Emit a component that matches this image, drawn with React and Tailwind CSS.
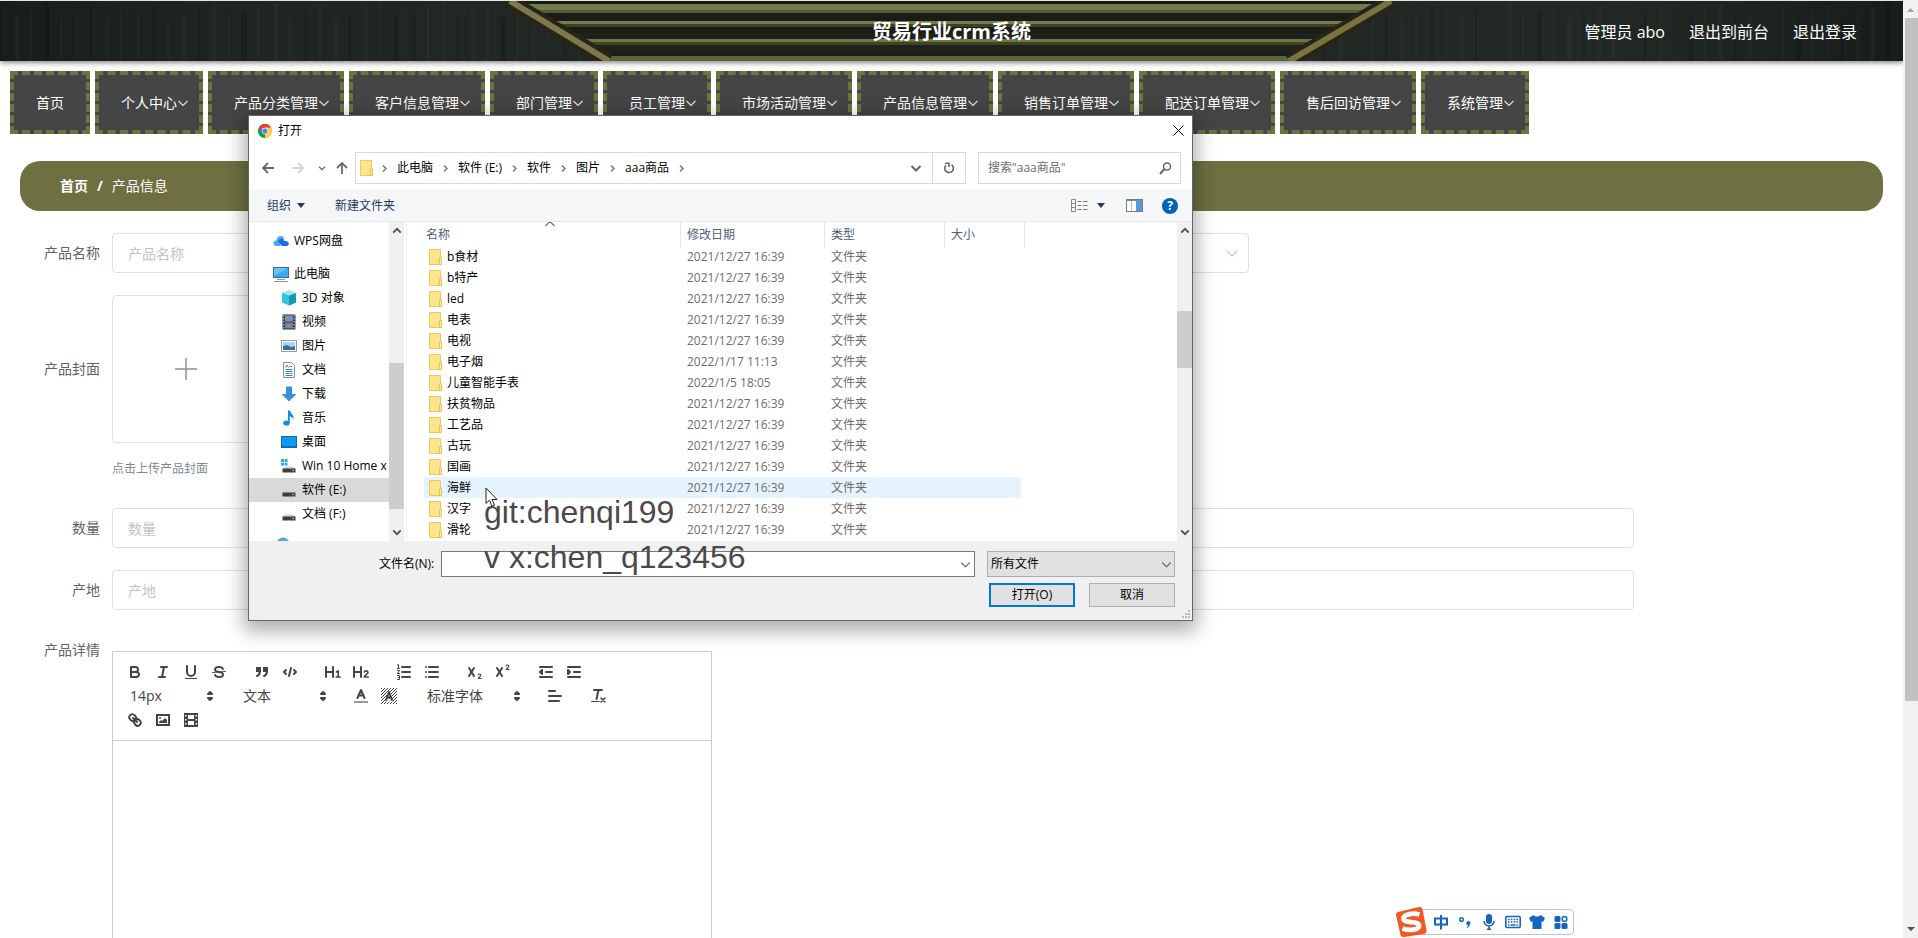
import React from "react";

const NAV = [
  ["首页", false],
  ["个人中心", true],
  ["产品分类管理", true],
  ["客户信息管理", true],
  ["部门管理", true],
  ["员工管理", true],
  ["市场活动管理", true],
  ["产品信息管理", true],
  ["销售订单管理", true],
  ["配送订单管理", true],
  ["售后回访管理", true],
  ["系统管理", true],
];

const FILES = [
  ["b食材", "2021/12/27 16:39"],
  ["b特产", "2021/12/27 16:39"],
  ["led", "2021/12/27 16:39"],
  ["电表", "2021/12/27 16:39"],
  ["电视", "2021/12/27 16:39"],
  ["电子烟", "2022/1/17 11:13"],
  ["儿童智能手表", "2022/1/5 18:05"],
  ["扶贫物品", "2021/12/27 16:39"],
  ["工艺品", "2021/12/27 16:39"],
  ["古玩", "2021/12/27 16:39"],
  ["国画", "2021/12/27 16:39"],
  ["海鲜", "2021/12/27 16:39"],
  ["汉字", "2021/12/27 16:39"],
  ["滑轮", "2021/12/27 16:39"],
];

function Chevron({ dir = "down", size = 12, width = 1.2, className = "" }) {
  const d = {
    down: "M1.5 4 L6 8.5 L10.5 4",
    up: "M1.5 8 L6 3.5 L10.5 8",
    right: "M4 2 L8 6 L4 10",
  }[dir];
  return (
    <svg width={size} height={size} viewBox="0 0 12 12" fill="none" stroke="currentColor" strokeWidth={width} className={className} aria-hidden="true">
      <path d={d} />
    </svg>
  );
}

function HeaderArt() {
  const streaks = [];
  for (let i = 0; i < 120; i++) {
    const x = (i * 137) % 1903;
    const o = 0.05 + ((i * 7) % 5) * 0.025;
    streaks.push(
      <rect key={i} x={x} y={(i * 11) % 20} width={2 + (i % 4)} height="60" fill={i % 3 ? "#3b4640" : "#050807"} opacity={o + 0.05} />
    );
  }
  return (
    <svg className="absolute inset-0 h-full w-full" viewBox="0 0 1903 60" preserveAspectRatio="none" aria-hidden="true">
      <defs>
        <linearGradient id="wood" x1="0" x2="1">
          <stop offset="0" stopColor="#191e1b" />
          <stop offset="0.15" stopColor="#202723" />
          <stop offset="0.85" stopColor="#222925" />
          <stop offset="1" stopColor="#181d1a" />
        </linearGradient>
        <clipPath id="plate">
          <path d="M510 0 H1391 L1289 60 H609 Z" />
        </clipPath>
      </defs>
      <rect width="1903" height="60" fill="url(#wood)" />
      {streaks}
      <g clipPath="url(#plate)">
        <rect x="500" width="900" height="60" fill="#1b1c14" />
        <rect x="500" y="32" width="900" height="6" fill="#1d221f" />
        <rect x="500" y="44" width="900" height="8" fill="#1d221f" />
        <rect x="500" y="3" width="900" height="6" fill="#717b50" />
        <rect x="500" y="9" width="900" height="3" fill="#535b36" />
        <rect x="500" y="20" width="900" height="3" fill="#767c52" />
        <rect x="500" y="23" width="900" height="3" fill="#3c4121" />
        <rect x="500" y="38" width="900" height="3" fill="#6f7547" />
        <rect x="500" y="41" width="900" height="3" fill="#41451f" />
        <rect x="500" y="55" width="900" height="5" fill="#5e6339" />
      </g>
      <path d="M510 0 L609 60" stroke="#2a2416" strokeWidth="14" />
      <path d="M1391 0 L1289 60" stroke="#2a2416" strokeWidth="14" />
      <path d="M510 0 L609 60" stroke="#7c7a4c" strokeWidth="6" />
      <path d="M1391 0 L1289 60" stroke="#77743f" strokeWidth="6" />
    </svg>
  );
}

function Header() {
  return (
    <header className="relative z-10 grid h-[61px] shrink-0 grid-cols-[1fr_auto_1fr] items-center border-t border-[#dfe8e0] pt-0.5 text-white shadow-[0_1px_6px_rgba(0,0,0,0.6)]">
      <HeaderArt />
      <span />
      <h1 className="relative text-xl font-bold leading-6">贸易行业crm系统</h1>
      <div className="relative flex justify-end gap-6 pr-[46px] text-base leading-6">
        <span>管理员 abo</span>
        <a href="#front">退出到前台</a>
        <a href="#logout">退出登录</a>
      </div>
    </header>
  );
}

function Nav() {
  return (
    <nav className="flex shrink-0 gap-[5px] pl-[10px] pt-[10px]">
      {NAV.map(([t, more]) => (
        <a
          key={t}
          href="#nav"
          className={
            "flex h-[63px] shrink-0 items-center border-4 border-dashed border-[#6b7340] bg-[#454545] text-sm text-white " +
            (more ? "pl-[22px] pr-[10px]" : "px-[22px]")
          }
        >
          {t}
          {more && <Chevron width={1.1} className="text-[#e4e4e4]" />}
        </a>
      ))}
    </nav>
  );
}

/* ---------- rich text editor ---------- */

const S = { fill: "none", stroke: "#444", strokeWidth: 2, strokeLinecap: "round", strokeLinejoin: "round" };
const F = { fill: "#444" };

const ICONS = {
  bold: (
    <g {...S}>
      <path d="M5,4H9.5A2.5,2.5,0,0,1,12,6.5v0A2.5,2.5,0,0,1,9.5,9H5Z" />
      <path d="M5,9h5.5A2.5,2.5,0,0,1,13,11.5v0A2.5,2.5,0,0,1,10.5,14H5Z" />
    </g>
  ),
  italic: <path {...S} d="M7,4H13M5,14H11M8,14L10,4" />,
  underline: (
    <g>
      <path {...S} d="M5,3V9a4,4,0,0,0,4,4a4,4,0,0,0,4-4V3" />
      <rect {...F} x="3" y="15" width="12" height="1" />
    </g>
  ),
  strike: (
    <g>
      <path {...S} d="M12.9,6C12.5,4.8 11,4 9,4C6.8,4 5,5 5,6.5C5,8.2 6.5,8.7 9,9C11.5,9.3 13,9.8 13,11.5C13,13 11.2,14 9,14C7,14 5.5,13.2 5.1,12" />
      <path {...S} strokeWidth="1" d="M15.5,8.5L2.5,9.5" />
    </g>
  ),
  quote: (
    <g {...S} strokeLinejoin="miter">
      <rect {...F} x="4" y="5" width="3" height="3" />
      <rect {...F} x="11" y="5" width="3" height="3" />
      <path {...F} d="M7,8c0,4.031-3,5-3,5M14,8c0,4.031-3,5-3,5" />
    </g>
  ),
  code: <path {...S} d="M5,7L3,9L5,11M13,7L15,9L13,11M10,5L8,13" />,
  h1: (
    <g {...S}>
      <path d="M2,4V14M9,4V14M2,9H9" />
      <path strokeWidth="1.6" d="M12.4,9L14.2,7.8V14M12.2,14H16.2" />
    </g>
  ),
  h2: (
    <g {...S}>
      <path d="M2,4V14M9,4V14M2,9H9" />
      <path strokeWidth="1.6" d="M12.3,9C12.6,7.4 16,7.4 16,9.4C16,11 12.4,12.2 12.2,14H16.3" />
    </g>
  ),
  ol: (
    <g {...S}>
      <path d="M7,4H15M7,9H15M7,14H15" />
      <path strokeWidth="1" d="M2.5,2L3.5,1.5V5.5M2.5,5.5H4.5M2.5,7.5H4.5L2.5,10.5H4.5M2.5,12.5H4.5V16.5H2.5M3,14.5H4.5" />
    </g>
  ),
  ul: <path {...S} d="M6,4H15M6,9H15M6,14H15M3,4H3.01M3,9H3.01M3,14H3.01" />,
  sub: (
    <g {...S}>
      <path d="M3,5L8,13M8,5L3,13" />
      <path strokeWidth="1.1" d="M12.2,12C12.5,10.6 15,10.8 14.8,12.3C14.6,13.5 12.6,14 12.3,15.5H15.2" />
    </g>
  ),
  sup: (
    <g {...S}>
      <path d="M3,5L8,13M8,5L3,13" />
      <path strokeWidth="1.1" d="M12.2,3C12.5,1.6 15,1.8 14.8,3.3C14.6,4.5 12.6,5 12.3,6.5H15.2" />
    </g>
  ),
  outdent: (
    <g {...S}>
      <path d="M3,14H15M3,4H15M9,9H15" />
      <path {...F} d="M5,7V11L3,9Z" />
    </g>
  ),
  indent: (
    <g {...S}>
      <path d="M3,14H15M3,4H15M9,9H15" />
      <path {...F} d="M3,7V11L5,9Z" />
    </g>
  ),
  color: (
    <g {...S}>
      <path d="M5.5,11L9,3L12.5,11M6.4,8.5H11.6" />
      <path stroke="#9a9a9a" d="M2,15H16" strokeLinecap="butt" />
    </g>
  ),
  background: (
    <g>
      <defs>
        <pattern id="hatch" width="3" height="3" patternUnits="userSpaceOnUse">
          <path d="M0,3L3,0" stroke="#444" strokeWidth="1" />
        </pattern>
      </defs>
      <rect x="1" y="1" width="16" height="16" fill="url(#hatch)" />
      <path d="M4.5,15L9,3L13.5,15Z" fill="#fff" opacity="0.7" />
      <path {...S} d="M6,13L9,5L12,13M7,10.5H11" />
    </g>
  ),
  align: <path {...S} d="M3,9H15M3,14H13M3,4H9" />,
  clean: (
    <g {...S}>
      <path d="M5,3H13M9.5,3L7.5,12" />
      <path strokeWidth="1.6" d="M12,11L16,15M16,11L12,15" />
      <path strokeWidth="1" d="M2.5,14.5H10" />
    </g>
  ),
  link: (
    <g {...S}>
      <path d="M7,7L11,11" />
      <path d="M8.9,4.577a3.476,3.476,0,0,1,.36,4.679A3.476,3.476,0,0,1,4.577,8.9C3.185,7.5,2.035,6.4,4.217,4.217S7.5,3.185,8.9,4.577Z" />
      <path d="M13.423,9.1a3.476,3.476,0,0,0-4.679-.36,3.476,3.476,0,0,0,.36,4.679c1.392,1.392,2.5,2.542,4.679.36S14.815,10.5,13.423,9.1Z" />
    </g>
  ),
  image: (
    <g>
      <rect {...S} x="3" y="4" width="12" height="10" strokeLinejoin="miter" />
      <circle {...F} cx="6" cy="7" r="1" />
      <path {...F} d="M5,12V11L7,9L8,10L11,7L13,9V12Z" />
    </g>
  ),
  video: (
    <g>
      <rect x="2" y="2" width="14" height="14" {...F} />
      <path fill="#fff" d="M6,4H12V8H6ZM6,10H12V14H6ZM3,4H4.5V5.5H3ZM3,8H4.5V9.5H3ZM3,12H4.5V13.5H3ZM13.5,4H15V5.5H13.5ZM13.5,8H15V9.5H13.5ZM13.5,12H15V13.5H13.5Z" />
    </g>
  ),
};

function Tool({ name }) {
  return (
    <button type="button" aria-label={name} className="flex h-6 w-7 items-center justify-center">
      <svg width="18" height="18" viewBox="0 0 18 18" aria-hidden="true">
        {ICONS[name]}
      </svg>
    </button>
  );
}

function Group({ names }) {
  return (
    <div className="flex">
      {names.map((n) => (
        <Tool key={n} name={n} />
      ))}
    </div>
  );
}

function Picker({ value, label, wide }) {
  return (
    <div className={"relative flex h-6 items-center " + (wide ? "w-[108px]" : "w-[98px]")}>
      <select aria-label={label} className="h-6 w-full appearance-none bg-transparent pl-[9px] text-sm leading-6 text-[#444]">
        <option>{value}</option>
      </select>
      <svg className="pointer-events-none absolute right-0" width="18" height="18" viewBox="0 0 18 18" aria-hidden="true">
        <path d="M7 7L9 5L11 7ZM7 11L9 13L11 11Z" fill="#444" stroke="#444" strokeWidth="2" strokeLinejoin="round" />
      </svg>
    </div>
  );
}

function Editor() {
  return (
    <div className="mt-[19px] w-[600px] border border-[#ccc]">
      <div className="border-b border-[#ccc] p-2">
        <div className="flex gap-[15px]">
          <Group names={["bold", "italic", "underline", "strike"]} />
          <Group names={["quote", "code"]} />
          <Group names={["h1", "h2"]} />
          <Group names={["ol", "ul"]} />
          <Group names={["sub", "sup"]} />
          <Group names={["outdent", "indent"]} />
        </div>
        <div className="flex gap-[15px]">
          <Picker value="14px" label="字号" />
          <Picker value="文本" label="标题" />
          <Group names={["color", "background"]} />
          <Picker value="标准字体" label="字体" wide />
          <Group names={["align"]} />
          <Group names={["clean"]} />
        </div>
        <Group names={["link", "image", "video"]} />
      </div>
      <textarea aria-label="产品详情" className="block h-80 w-full resize-none outline-none" />
    </div>
  );
}

/* ---------- form ---------- */

const INPUT = "h-10 rounded border border-[#dcdfe6] bg-white px-[15px] text-sm text-[#606266] outline-none placeholder:text-[#c0c4cc]";
const LABEL = "w-[100px] shrink-0 text-right text-sm leading-10 text-[#606266]";

function Form() {
  return (
    <form className="flex flex-col gap-[22px] pt-[22px]">
      <div className="flex gap-3">
        <label htmlFor="pname" className={LABEL}>产品名称</label>
        <div className="flex w-[1137px] items-center gap-[200px]">
          <input id="pname" placeholder="产品名称" className={INPUT + " flex-1"} />
          <div className="relative flex flex-1 items-center">
            <select aria-label="产品分类" className={INPUT + " w-full appearance-none"} />
            <Chevron size={14} width={1} className="pointer-events-none absolute right-[10px] text-[#c0c4cc]" />
          </div>
        </div>
      </div>
      <div className="flex gap-3">
        <span className={LABEL + " flex h-[148px] items-center justify-end"}>产品封面</span>
        <div>
          <button type="button" aria-label="产品封面" className="flex h-[148px] w-[148px] items-center justify-center rounded border border-[#dcdfe6]">
            <svg width="24" height="24" viewBox="0 0 24 24" stroke="#8c939d" strokeWidth="1.5" aria-hidden="true">
              <path d="M12 1V23M1 12H23" />
            </svg>
          </button>
          <p className="mt-4 h-[27px] text-xs leading-5 text-[#7d8894]">点击上传产品封面</p>
        </div>
      </div>
      <div className="flex gap-3">
        <label htmlFor="qty" className={LABEL}>数量</label>
        <input id="qty" placeholder="数量" className={INPUT + " w-4/5"} />
      </div>
      <div className="flex gap-3">
        <label htmlFor="origin" className={LABEL}>产地</label>
        <input id="origin" placeholder="产地" className={INPUT + " w-4/5"} />
      </div>
      <div className="flex gap-3">
        <span className="w-[100px] shrink-0 text-right text-sm leading-9 text-[#606266]">产品详情</span>
        <Editor />
      </div>
    </form>
  );
}

/* ---------- file dialog ---------- */

function ChromeIcon() {
  return (
    <svg width="14" height="14" viewBox="0 0 24 24" aria-hidden="true">
      <path d="M12 12L1.6 6A12 12 0 0 1 22.4 6Z" fill="#db4437" />
      <path d="M12 12L22.4 6A12 12 0 0 1 12 24Z" fill="#ffcd40" />
      <path d="M12 12L12 24A12 12 0 0 1 1.6 6Z" fill="#0f9d58" />
      <path d="M12 6H22.4A12 12 0 0 0 1.6 6L7 15Z" fill="#db4437" />
      <path d="M17.2 15L12 24A12 12 0 0 0 22.4 6H12Z" fill="#ffcd40" />
      <circle cx="12" cy="12" r="5.6" fill="#f1f1f1" />
      <circle cx="12" cy="12" r="4.4" fill="#4285f4" />
    </svg>
  );
}

function Folder() {
  return (
    <svg width="14" height="16" viewBox="0 0 14 16" className="shrink-0" aria-hidden="true">
      <path d="M1.5 .5H12.5V15.5H1.5Z" fill="#ffe48e" stroke="#ecc95c" />
      <path d="M11.5 8.5H13.5V15.5H11.5Z" fill="#ffe9a2" stroke="#e3b93c" strokeWidth="0.8" />
    </svg>
  );
}

const SIDE_ICONS = {
  wps: (
    <g>
      <path d="M0.500 11A3.400 3.400 0 0 1 3.400 7.200C4 3 9 1.500 11 5L7 13H3A2.500 2.500 0 0 1 0.500 11Z" fill="#4aa8fa" />
      <path d="M5 8C6.500 4.500 11 4.600 11.400 8C14.200 7.500 16 9 15.900 11A2.600 2.600 0 0 1 13 13H9Z" fill="#1a6fe8" />
    </g>
  ),
  pc: (
    <g>
      <rect x="0.500" y="1.500" width="15" height="10" fill="#3aa9f2" stroke="#2e6f9e" />
      <path d="M1 2H15L1 10Z" fill="#7accff" opacity="0.700" />
      <path d="M4 13.500H12M1 15.500H15" stroke="#8b9aa6" />
    </g>
  ),
  cube: (
    <g>
      <path d="M8 0.500L15 3V12.500L8 15.500L1 12.500V3Z" fill="#35c3d8" />
      <path d="M8 5.500L15 3V12.500L8 15.500Z" fill="#1497b4" />
      <path d="M8 0.500L15 3L8 5.500L1 3Z" fill="#9aeaf2" />
    </g>
  ),
  film: (
    <g>
      <rect x="1.500" y="0.500" width="13" height="15" fill="#333" />
      <rect x="4" y="1.500" width="8" height="6" fill="#6d94d8" />
      <rect x="4" y="8.500" width="8" height="6" fill="#5484cd" />
      <path d="M5 6L7 3.500L10 6.500V7.500H5ZM5 13L8 10L11 13.500Z" fill="#c08a3c" />
      <path d="M2.800 1V15M13.200 1V15" stroke="#ddd" strokeDasharray="1.500 1.500" />
    </g>
  ),
  pic: (
    <g>
      <rect x="0.500" y="2.500" width="15" height="11" fill="#fff" stroke="#9a9a9a" />
      <rect x="2" y="4" width="12" height="8" fill="#a9d4f2" />
      <path d="M2 8L6 7L10 9L14 8V12H2Z" fill="#3c6f94" />
    </g>
  ),
  doc: (
    <g>
      <path d="M2.500 0.500H10.500L13.500 3.500V15.500H2.500Z" fill="#fff" stroke="#8d8d8d" />
      <path d="M4.500 5.500L6 3L7.500 5.500M8.500 4.500H11M4.500 7.500H11.500M4.500 9.500H11.500M4.500 11.500H8M9 11.500H11.500M4.500 13.500H11.500" stroke="#3b86c8" fill="none" />
    </g>
  ),
  down: <path d="M5 0.500H11V8H15.500L8 15.500L0.500 8H5Z" fill="#3b8ede" />,
  music: (
    <g fill="#0f8ee6">
      <ellipse cx="5.500" cy="13" rx="3.200" ry="2.600" />
      <path d="M7 0.500H9C9.500 4 13.500 4.500 12.500 10C12 7.500 10.500 7 8.700 6.600V13H7Z" />
    </g>
  ),
  desk: (
    <g>
      <rect x="0.500" y="2.500" width="15" height="11" fill="#0a9bf5" stroke="#1267a8" />
      <path d="M1 12.500H15" stroke="#0d5f9c" strokeDasharray="2 1" />
    </g>
  ),
  drive: (
    <g>
      <path d="M3.500 8.500H12.500L14.500 11H1.500Z" fill="#d2d2d2" />
      <rect x="1.500" y="10.500" width="13" height="4" fill="#3e3e3e" />
      <rect x="11" y="12" width="2" height="1" fill="#5eea5e" />
    </g>
  ),
  win: (
    <g>
      <path d="M0 1H3V4H0ZM3.700 1H6.500V4H3.700ZM0 4.700H3V7.500H0ZM3.700 4.700H6.500V7.500H3.700Z" fill="#2aa7e8" />
      <path d="M4.500 8.500H12.500L14.500 11H2.500Z" fill="#d2d2d2" />
      <rect x="1.500" y="10.500" width="13" height="4" fill="#3e3e3e" />
      <rect x="11" y="12" width="2" height="1" fill="#5eea5e" />
    </g>
  ),
  net: <circle cx="10" cy="8" r="6.500" fill="#5aa6d8" />,
};

const TREE = [
  ["3D 对象", "cube"],
  ["视频", "film"],
  ["图片", "pic"],
  ["文档", "doc"],
  ["下载", "down"],
  ["音乐", "music"],
  ["桌面", "desk"],
  ["Win 10 Home x", "win"],
  ["软件 (E:)", "drive"],
  ["文档 (F:)", "drive"],
];

function TreeItem({ text, icon, nested, selected }) {
  return (
    <a
      href="#tree"
      className={
        "flex h-6 shrink-0 items-center gap-[5px] overflow-hidden whitespace-nowrap " +
        (nested ? "pl-8 " : "pl-6 ") +
        (selected ? "bg-[#d9d9d9]" : "")
      }
    >
      <svg width="16" height="16" viewBox="0 0 16 16" className="shrink-0" aria-hidden="true">
        {SIDE_ICONS[icon]}
      </svg>
      {text}
    </a>
  );
}

function ScrollRail({ before, thumb, after }) {
  return (
    <div className="flex w-[15px] shrink-0 flex-col items-center bg-[#f0f0f0] text-[#505050]">
      <Chevron dir="up" size={10} width={2.2} className="my-1 shrink-0" />
      <div className={before} />
      <div className={"w-full bg-[#cdcdcd] " + thumb} />
      <div className={after} />
      <Chevron size={10} width={2.2} className="my-1 shrink-0" />
    </div>
  );
}

function Caret({ className = "" }) {
  return (
    <svg width="8" height="5" viewBox="0 0 8 5" className={className} aria-hidden="true">
      <path d="M0 0H8L4 5Z" fill="#1e395b" />
    </svg>
  );
}

function AddressRow() {
  const arrow = { fill: "none", stroke: "currentColor", strokeWidth: 1.8 };
  return (
    <div className="mt-[7px] flex h-8 items-stretch pl-3 pr-[11px]">
      <div className="flex w-[94px] shrink-0 items-center text-[#6b6b6b]">
        <button type="button" aria-label="后退">
          <svg width="14" height="14" viewBox="0 0 14 14" {...arrow}><path d="M13 7H2M7 2L2 7L7 12" /></svg>
        </button>
        <button type="button" aria-label="前进" className="ml-4 text-[#d4d4d4]">
          <svg width="14" height="14" viewBox="0 0 14 14" {...arrow}><path d="M1 7H12M7 2L12 7L7 12" /></svg>
        </button>
        <button type="button" aria-label="最近" className="ml-[13px]">
          <Chevron size={8} width={2} />
        </button>
        <button type="button" aria-label="上移" className="ml-[9px]">
          <svg width="14" height="14" viewBox="0 0 14 14" {...arrow}><path d="M7 13V2M2 7L7 2L12 7" /></svg>
        </button>
      </div>
      <div className="flex flex-1 items-center border border-[#d9d9d9] pl-[3px] text-black">
        <Folder />
        <Chevron dir="right" size={9} width={2} className="ml-[7px] mr-2 text-[#777]" />
        {["此电脑", "软件 (E:)", "软件", "图片", "aaa商品"].map((t) => (
          <React.Fragment key={t}>
            <button type="button">{t}</button>
            <Chevron dir="right" size={9} width={2} className="mx-2 text-[#777]" />
          </React.Fragment>
        ))}
        <div className="flex-1" />
        <button type="button" aria-label="展开" className="mr-[10px] text-[#666]">
          <Chevron width={2} />
        </button>
        <button type="button" aria-label="刷新" className="flex h-full w-[33px] items-center justify-center border-l border-[#d9d9d9] text-[#666]">
          <svg width="12" height="12" viewBox="0 0 12 12" fill="none" stroke="currentColor" strokeWidth="1.600">
            <path d="M8.500 2.700A4.300 4.300 0 1 1 3 3.200" />
            <path d="M2 1.300H6V5" />
          </svg>
        </button>
      </div>
      <div className="ml-3 flex w-[203px] items-center border border-[#d9d9d9] pl-[9px] pr-2">
        <input aria-label="搜索" placeholder={'搜索"aaa商品"'} className="min-w-0 flex-1 outline-none placeholder:text-[#6d6d6d]" />
        <svg width="13" height="13" viewBox="0 0 13 13" fill="none" stroke="#666" strokeWidth="1.500" aria-hidden="true">
          <circle cx="8" cy="4.500" r="3.500" />
          <path d="M5.500 7L1 12" strokeWidth="2" />
        </svg>
      </div>
    </div>
  );
}

function ToolRow() {
  return (
    <div className="mt-[6px] flex h-8 items-center border-b border-[#e8e8e8] bg-[#f5f6f7] pl-[18px] pr-[14px] text-[#1e395b]">
      <button type="button" className="flex items-center gap-[6px]">
        组织 <Caret />
      </button>
      <button type="button" className="ml-[30px]">新建文件夹</button>
      <div className="flex-1" />
      <button type="button" aria-label="视图" className="flex items-center gap-[9px]">
        <svg width="17" height="13" viewBox="0 0 17 13" fill="none" stroke="#888">
          <path d="M.5.500H4.500V12.500H.5ZM.5 4.500H4.500M.5 8.500H4.500" />
          <path d="M6.500 2.500H10.500M12 2.500H16.500M6.500 6.500H10.500M12 6.500H16.500M6.500 10.500H10.500M12 10.500H16.500" stroke="#777" />
        </svg>
        <Caret />
      </button>
      <button type="button" aria-label="预览窗格" className="ml-[21px]">
        <svg width="17" height="13" viewBox="0 0 17 13">
          <rect x=".5" y=".5" width="16" height="12" fill="#fff" stroke="#7a7a7a" />
          <path d="M.5 1.500H16.500" stroke="#888" />
          <rect x="10" y="2" width="6" height="10" fill="#4d9fe0" />
          <path d="M5.500 2V12" stroke="#bbb" />
        </svg>
      </button>
      <button type="button" aria-label="帮助" className="ml-[19px] flex h-4 w-4 items-center justify-center rounded-full bg-[#0063b8] text-xs font-bold leading-4 text-white">
        ?
      </button>
    </div>
  );
}

function FileTable() {
  const th = "h-6 p-0 text-left align-top font-normal text-[#4c607a]";
  const cell = "relative z-10 -mb-0.5 flex h-[26px] items-center border-r border-[#e5e5e5] bg-white ";
  return (
    <div className="min-w-0 flex-1 overflow-hidden pl-[17px]">
      <table className="w-[601px] table-fixed border-collapse">
        <thead>
          <tr>
            <th className={th + " w-[257px]"}>
              <div className={cell + "pl-[2px]"}>
                名称
                <Chevron dir="up" width={1.1} className="absolute -top-1 left-[120px] text-[#666]" />
              </div>
            </th>
            <th className={th + " w-36"}><div className={cell + "pl-[6px]"}>修改日期</div></th>
            <th className={th + " w-[120px]"}><div className={cell + "pl-[6px]"}>类型</div></th>
            <th className={th + " w-20"}><div className={cell + "pl-[6px]"}>大小</div></th>
          </tr>
        </thead>
        <tbody>
          {FILES.map(([n, d]) => {
            const bg = n === "海鲜" ? " bg-[#e5f3ff]" : "";
            return (
              <tr key={n}>
                <td className={"h-[21px] p-0 pl-1 text-black" + bg}>
                  <span className="flex items-center gap-[5px]">
                    <Folder />
                    {n}
                  </span>
                </td>
                <td className={"p-0 pl-[6px] text-[#6d6d6d]" + bg}>{d}</td>
                <td className={"p-0 pl-[6px] text-[#6d6d6d]" + bg}>文件夹</td>
                <td className="p-0"><div className={"mr-1 h-[21px]" + bg} /></td>
              </tr>
            );
          })}
        </tbody>
      </table>
    </div>
  );
}

function FileDialog() {
  return (
    <section
      role="dialog"
      aria-label="打开"
      className="absolute left-[248px] top-[115px] z-20 w-[945px] border border-[#666] bg-white text-xs leading-4 text-black shadow-[0_6px_18px_4px_rgba(0,0,0,0.32)]"
    >
      <div className="flex h-[29px] items-center gap-[6px] pl-[9px] pr-2">
        <ChromeIcon />
        <span className="flex-1">打开</span>
        <button type="button" aria-label="关闭">
          <svg width="11" height="11" viewBox="0 0 11 11" stroke="#000"><path d="M.5.500L10.500 10.500M10.500.500L.5 10.500" /></svg>
        </button>
      </div>
      <AddressRow />
      <ToolRow />
      <div className="flex h-[319px]">
        <div className="flex w-[140px] shrink-0 flex-col overflow-hidden pt-[7px]">
          <TreeItem text="WPS网盘" icon="wps" />
          <div className="h-[9px] shrink-0" />
          <TreeItem text="此电脑" icon="pc" />
          {TREE.map(([t, i]) => (
            <TreeItem key={t} text={t} icon={i} nested selected={t === "软件 (E:)"} />
          ))}
          <div className="h-[6px] shrink-0" />
          <TreeItem text="" icon="net" />
        </div>
        <ScrollRail before="flex-[123]" thumb="flex-[146]" after="flex-[14]" />
        <div className="ml-[2px] border-l border-[#f0f0f0]" />
        <FileTable />
        <ScrollRail before="flex-[71]" thumb="flex-[57]" after="flex-[155]" />
      </div>
      <div className="relative bg-[#f0f0f0] pb-[13px] pl-[130px] pr-[17px] pt-[10px]">
        <div className="flex items-center">
          <label htmlFor="fname" className="w-[62px] shrink-0">文件名(N):</label>
          <div className="relative flex flex-1 items-center">
            <input id="fname" className="h-[26px] w-full border border-[#7a7a7a] bg-white px-1 outline-none" />
            <Chevron size={11} width={1.2} className="absolute right-[4px] text-[#555]" />
          </div>
          <div className="relative ml-3 flex w-[188px] items-center">
            <select aria-label="文件类型" className="h-[26px] w-full appearance-none border border-[#adadad] bg-[#e1e1e1] pl-[3px]">
              <option>所有文件</option>
            </select>
            <Chevron size={11} width={1.2} className="pointer-events-none absolute right-[3px] text-[#555]" />
          </div>
        </div>
        <div className="mt-[6px] flex justify-end gap-[14px]">
          <button type="button" className="h-6 w-[86px] border-2 border-[#0078d7] bg-[#e1e1e1]">打开(O)</button>
          <button type="button" className="h-6 w-[86px] border border-[#adadad] bg-[#e1e1e1]">取消</button>
        </div>
        <svg className="absolute bottom-[2px] right-[2px]" width="8" height="8" viewBox="0 0 8 8" fill="#b8b8b8" aria-hidden="true">
          <path d="M6 0H8V2H6ZM3 3H5V5H3ZM6 3H8V5H6ZM0 6H2V8H0ZM3 6H5V8H3ZM6 6H8V8H6Z" />
        </svg>
      </div>
    </section>
  );
}

/* ---------- desktop overlays ---------- */

function ImeBar() {
  return (
    <div className="absolute bottom-0 left-[1395px] z-30 flex items-center text-[#1565c0]">
      <svg width="32" height="32" viewBox="0 0 32 32" className="relative z-10" aria-hidden="true">
        <path d="M3 6L24 1Q27 .5 27.500 3L31.500 24Q32 27 29 28L9 31Q6 31.500 5.500 29L1 9Q.5 7 3 6Z" fill="#ee5a24" />
        <path d="M24.500 8.500C17 6.500 8 8.500 8.500 13C9 17.500 24 14.500 24 19.500C24 24 14 25 7.500 22.500" fill="none" stroke="#fff" strokeWidth="4.800" />
      </svg>
      <div className="-ml-4 flex h-[26px] items-center gap-2 rounded-sm border border-[#b4c3e4] bg-white pl-[21px] pr-1">
        <svg width="16" height="16" viewBox="0 0 16 16" fill="none" stroke="currentColor" strokeWidth="2" aria-label="中">
          <path d="M2 4.500H14V10.500H2ZM8 1V15.500" />
        </svg>
        <svg width="16" height="16" viewBox="0 0 16 16" aria-hidden="true">
          <circle cx="4.500" cy="5.500" r="1.800" fill="none" stroke="currentColor" strokeWidth="1.500" />
          <path d="M9.500 8.500A2 2 0 1 1 12.800 10.500C12.500 12.500 11.500 13.500 10 14L9.700 13.200C10.500 12.700 11 12 11 11.200A1.800 1.800 0 0 1 9.500 8.500Z" fill="currentColor" />
        </svg>
        <svg width="16" height="16" viewBox="0 0 16 16" aria-hidden="true">
          <rect x="5" y="0" width="6" height="10" rx="3" fill="currentColor" />
          <path d="M3 7A5 5 0 0 0 13 7M8 12V15M6 15.200H10" fill="none" stroke="currentColor" strokeWidth="1.600" />
        </svg>
        <svg width="16" height="16" viewBox="0 0 16 16" aria-hidden="true">
          <rect x="0.800" y="2.500" width="14.400" height="11" rx="1" fill="none" stroke="currentColor" strokeWidth="1.600" />
          <path d="M3 5.500H13M3 8H13" stroke="currentColor" strokeWidth="1.600" strokeDasharray="1.600 1.200" />
          <path d="M3 11H4.500M5.500 11H10.500M11.500 11H13" stroke="currentColor" strokeWidth="1.400" />
        </svg>
        <svg width="16" height="16" viewBox="0 0 16 16" aria-hidden="true">
          <path d="M4.500 1C6 3 10 3 11.500 1L16 4L14 8L12.500 7.200V15H3.500V7.200L2 8L0 4Z" fill="currentColor" />
        </svg>
        <svg width="16" height="16" viewBox="0 0 16 16" fill="currentColor" aria-hidden="true">
          <rect x="1.500" y="2" width="6" height="6" rx="1.500" />
          <rect x="1.500" y="9" width="6" height="6" rx="1.500" />
          <rect x="8.500" y="9" width="6" height="6" rx="1.500" />
          <rect x="9.300" y="2.800" width="4.400" height="4.400" rx="1.500" fill="none" stroke="currentColor" strokeWidth="1.600" />
        </svg>
      </div>
    </div>
  );
}

function PageScrollbar() {
  return (
    <div className="flex w-[15px] shrink-0 flex-col items-center bg-[#f1f1f1]">
      <svg width="15" height="18" viewBox="0 0 15 18" className="shrink-0" aria-hidden="true"><path d="M4 12H11L7.500 8Z" fill="#a3a3a3" /></svg>
      <div className="ml-[2px] w-[13px] flex-[683] bg-[#c1c1c1]" />
      <div className="flex-[219]" />
      <svg width="15" height="18" viewBox="0 0 15 18" className="shrink-0" aria-hidden="true"><path d="M4 7H12L8 11Z" fill="#505050" /></svg>
    </div>
  );
}

export default function App() {
  return (
    <div className="relative flex h-screen overflow-hidden bg-white font-['Open_Sans','Noto_Sans_CJK_SC',sans-serif]">
      <div className="flex min-w-0 flex-1 flex-col overflow-hidden">
        <Header />
        <Nav />
        <div className="mx-5 mt-[27px] flex h-[50px] shrink-0 items-center gap-[9px] rounded-[20px] bg-[#6e7042] pl-10 text-sm text-white">
          <a href="#home" className="font-bold">首页</a>
          <span className="font-bold">/</span>
          <span>产品信息</span>
        </div>
        <Form />
      </div>
      <PageScrollbar />
      <FileDialog />
      <svg className="absolute left-[485px] top-[487px] z-30" width="14" height="21" viewBox="0 0 14 21" aria-hidden="true">
        <path d="M1 1V16.500L4.500 13.200L7 19.200L9.500 18.200L7 12.500H12Z" fill="#fff" stroke="#222" />
      </svg>
      <div className="pointer-events-none absolute left-[484px] top-[496px] z-30 flex flex-col items-start gap-[13px] font-['Liberation_Sans',sans-serif] text-[32px] leading-8 text-[#4a4a4a]">
        <span>git:chenqi199</span>
        <span>v x:chen_q123456</span>
      </div>
      <ImeBar />
    </div>
  );
}
